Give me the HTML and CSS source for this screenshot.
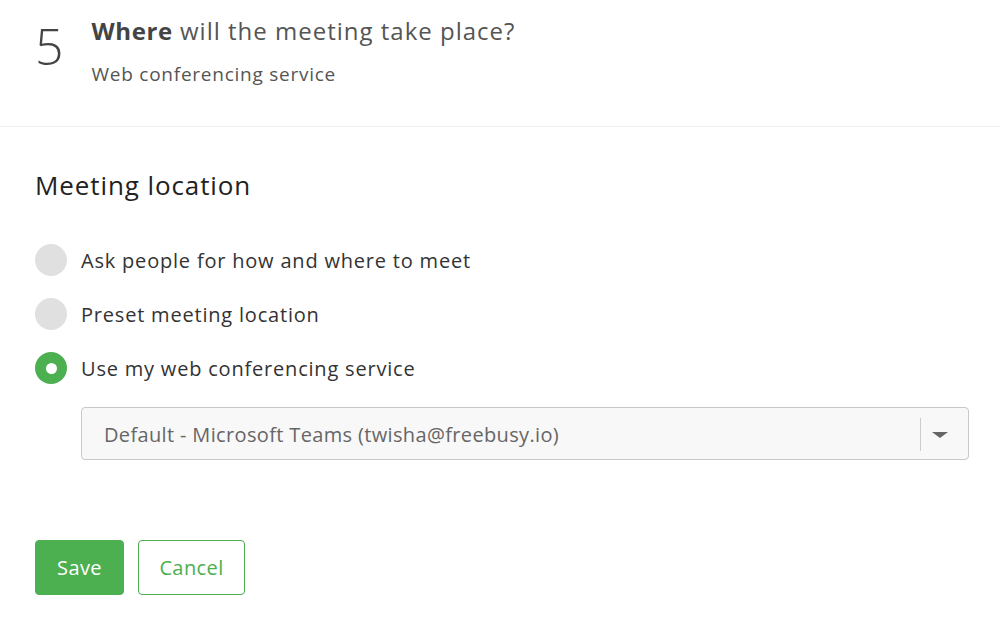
FILE: index.html
```html
<!DOCTYPE html>
<html lang="en">
<head>
<meta charset="utf-8">
<title>Meeting location</title>
<link rel="stylesheet" href="styles.css">
</head>
<body>
<header class="step">
  <div class="step-num">5</div>
  <div class="step-text">
    <h1 class="step-title"><strong>Where</strong> will the meeting take place?</h1>
    <p class="step-sub">Web conferencing service</p>
  </div>
</header>
<main class="panel">
  <h2 class="section-title">Meeting location</h2>
  <div class="options">
    <label class="option"><span class="radio"></span><span class="option-label">Ask people for how and where to meet</span></label>
    <label class="option"><span class="radio"></span><span class="option-label">Preset meeting location</span></label>
    <label class="option"><span class="radio checked"></span><span class="option-label">Use my web conferencing service</span></label>
  </div>
  <div class="select">
    <span class="select-value">Default - Microsoft Teams (twisha@freebusy.io)</span>
    <span class="select-sep"></span>
    <span class="select-arrow"></span>
  </div>
  <div class="actions">
    <button class="btn btn-primary">Save</button>
    <button class="btn btn-outline">Cancel</button>
  </div>
</main>
</body>
</html>
```
FILE: styles.css
```css
* { box-sizing: border-box; }
html, body { margin: 0; padding: 0; background: #fff; }
body {
  font-family: "Open Sans", "Noto Sans", Arial, sans-serif;
  color: #333;
  width: 1000px;
  height: 617px;
  overflow: hidden;
}
.step {
  display: flex;
  align-items: flex-start;
  gap: 28px;
  padding: 14px 35px 0 35px;
  height: 127px;
  border-bottom: 1px solid #f0f0f0;
}
.step-num {
  font-size: 50px;
  line-height: 64px;
  color: #444;
  font-weight: 300;
}
.step-title {
  margin: 0;
  font-size: 24px;
  font-weight: 400;
  color: #555;
  line-height: 36px;
  margin-top: -1px;
  letter-spacing: 1px;
}
.step-title strong { font-weight: 700; color: #444; letter-spacing: 0.6px; }
.step-sub {
  margin: 13px 0 0 0;
  font-size: 19px;
  color: #555;
  line-height: 24px;
  letter-spacing: 0.75px;
}
.panel {
  padding: 0 31px 0 35px;
}
.section-title {
  margin: 40px 0 0 0;
  font-size: 26px;
  font-weight: 400;
  color: #222;
  line-height: 36px;
  letter-spacing: 0.9px;
}
.options {
  margin-top: 41px;
  display: flex;
  flex-direction: column;
  gap: 22px;
}
.option {
  display: flex;
  align-items: center;
  gap: 14px;
  height: 32px;
}
.radio {
  width: 32px;
  height: 32px;
  border-radius: 50%;
  background: #e0e0e0;
  flex: none;
  display: flex;
  align-items: center;
  justify-content: center;
}
.radio.checked { background: #4caf50; }
.radio.checked::after {
  content: "";
  width: 11px;
  height: 11px;
  border-radius: 50%;
  background: #fff;
}
.option-label {
  font-size: 20px;
  color: #333;
  letter-spacing: 0.8px;
}
.select {
  margin: 23px 0 0 46px;
  height: 53px;
  border: 1px solid #c8c8c8;
  border-radius: 4px;
  background: #f8f8f8;
  display: flex;
  align-items: center;
  padding: 2px 20px 0 22px;
}
.select-value {
  flex: 1;
  font-size: 20px;
  color: #666;
  letter-spacing: 0.35px;
}
.select-sep {
  width: 1px;
  height: 33px;
  background: #ccc;
  margin-right: 11px;
}
.select-arrow {
  width: 0;
  height: 0;
  border-left: 8px solid transparent;
  border-right: 8px solid transparent;
  border-top: 6px solid #666;
}
.actions {
  margin-top: 80px;
  display: flex;
  gap: 14px;
}
.btn {
  height: 55px;
  border-radius: 4px;
  font-family: inherit;
  font-size: 20px;
  padding: 0;
  cursor: pointer;
  letter-spacing: 0.4px;
}
.btn-primary {
  width: 89px;
  background: #4caf50;
  border: 1px solid #4caf50;
  color: #fff;
}
.btn-outline {
  width: 107px;
  background: #fff;
  border: 1px solid #4caf50;
  color: #4caf50;
}
```
